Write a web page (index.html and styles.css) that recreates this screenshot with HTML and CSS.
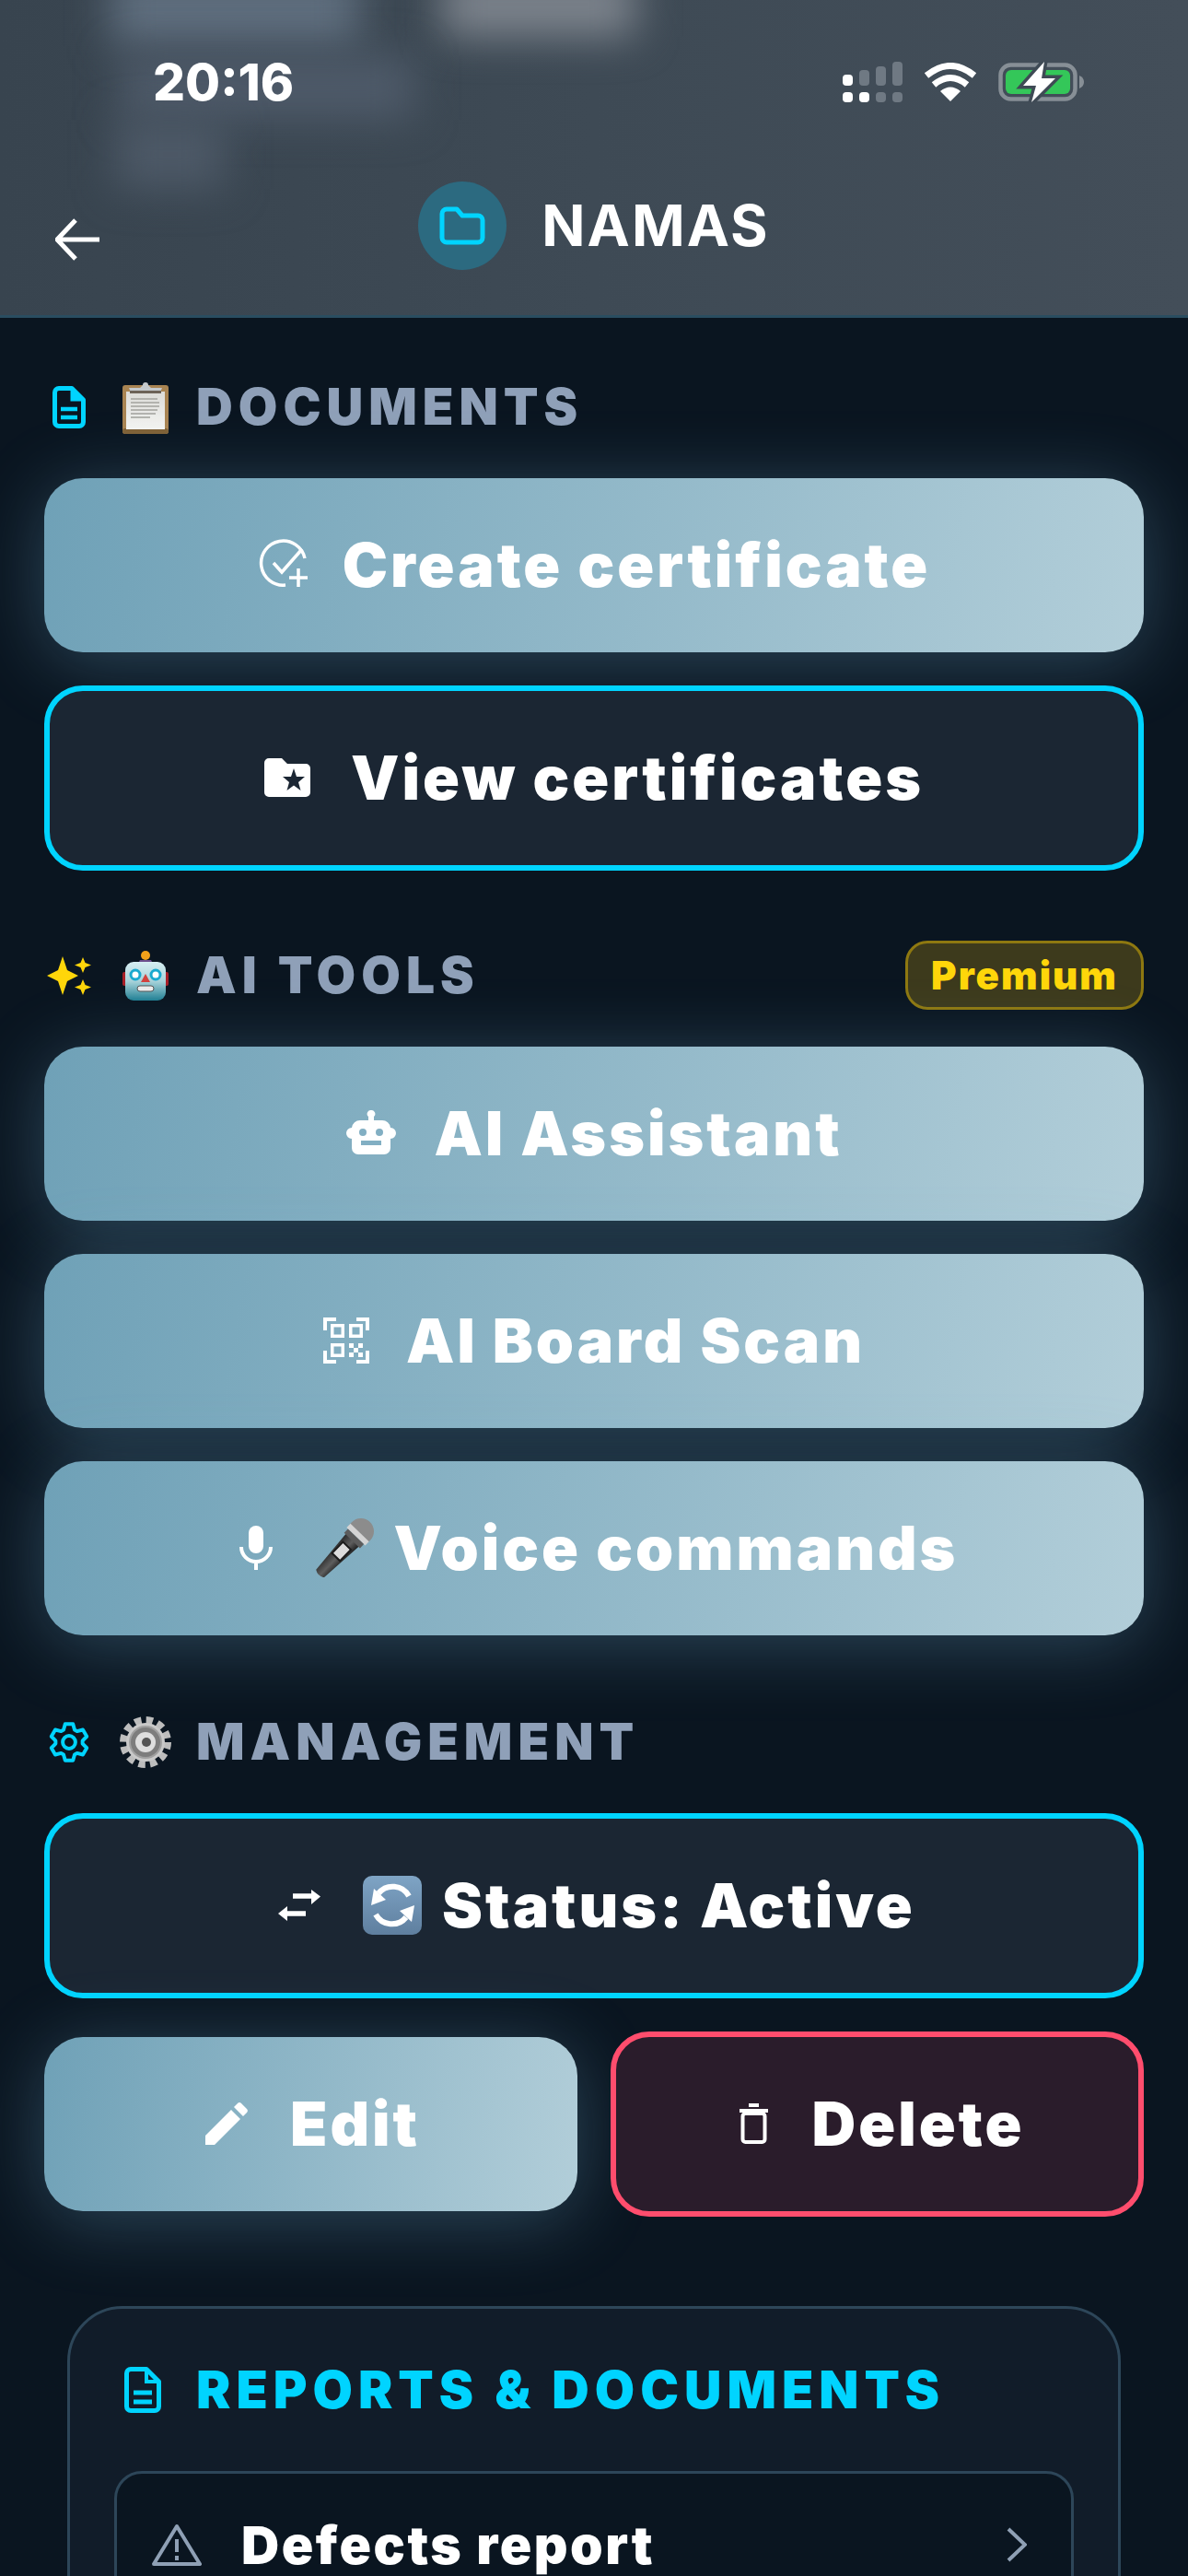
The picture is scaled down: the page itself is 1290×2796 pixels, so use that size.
FILE: index.html
```html
<!DOCTYPE html>
<html lang="en">
<head>
<meta charset="utf-8">
<title>NAMAS</title>
<link rel="stylesheet" href="styles.css">
</head>
<body>
<div class="screen">
  <header class="topbar">
    <div class="blob blob-a"></div>
    <div class="blob blob-b"></div>
    <div class="blob blob-c"></div>
    <div class="blob blob-d"></div>
    <div class="status-bar">
      <span class="time">20:16</span>
      <div class="status-icons">
        <svg class="ic-signal" viewBox="0 0 65 44" width="65" height="44">
          <g fill="#6f7983">
            <rect x="18" y="9" width="11" height="17" rx="4"/><rect x="36" y="5" width="11" height="21" rx="4"/><rect x="54" y="0" width="11" height="26" rx="4"/>
            <rect x="36" y="33" width="11" height="11" rx="4"/><rect x="54" y="33" width="11" height="11" rx="4"/>
          </g>
          <g fill="#fff">
            <rect x="0" y="14" width="11" height="12" rx="4"/><rect x="0" y="33" width="11" height="11" rx="4"/><rect x="18" y="33" width="11" height="11" rx="4"/>
          </g>
        </svg>
        <svg class="ic-wifi" viewBox="0 0 58 42" width="58" height="42">
          <path d="M29 42 L18 31 Q29 22 40 31 Z" fill="#fff"/>
          <path d="M11 24 Q29 9 47 24" fill="none" stroke="#fff" stroke-width="7"/>
          <path d="M3 14 Q29 -7 55 14" fill="none" stroke="#fff" stroke-width="7"/>
        </svg>
        <svg class="ic-batt" viewBox="0 0 93 44" width="93" height="44">
          <rect x="2.500" y="3.500" width="81" height="37" rx="11" fill="none" stroke="#878f96" stroke-width="4.500"/>
          <path d="M88 15 q5 2 5 7 t-5 7 z" fill="#878f96"/>
          <rect x="8" y="9" width="70" height="26" rx="6" fill="#34c759"/>
          <path d="M50 0 L27 26 H41 L36 44 L62 18 H47 Z" fill="#fff" stroke="#3f4a55" stroke-width="7" paint-order="stroke"/>
        </svg>
      </div>
    </div>
    <div class="title-row">
      <svg class="back" viewBox="0 0 48 48" width="48" height="48"><path d="M22 3 L2 24 L22 45 M3 24 H48" fill="none" stroke="#fff" stroke-width="5"/></svg>
      <div class="title-group">
        <span class="folder-badge">
          <svg viewBox="0 0 50 42" width="50" height="42"><path d="M3 8 a5 5 0 0 1 5-5 h11 l6 7 h17 a5 5 0 0 1 5 5 v19 a5 5 0 0 1-5 5 H8 a5 5 0 0 1-5-5 Z" fill="none" stroke="#00d4ff" stroke-width="5" stroke-linejoin="round"/></svg>
        </span>
        <span class="title">NAMAS</span>
      </div>
      <span></span>
    </div>
  </header>

  <main class="content">
    <section class="section">
      <div class="section-head">
        <span class="head-icon">
          <svg viewBox="0 0 36 46" width="36" height="46"><path d="M2.500 7 a4.500 4.500 0 0 1 4.500-4.500 H21 L33.500 15 V39 a4.500 4.500 0 0 1-4.500 4.500 H7 A4.500 4.500 0 0 1 2.500 39 Z" fill="none" stroke="#00d4ff" stroke-width="5" stroke-linejoin="round"/><path d="M21 3 V15 H33" fill="#00d4ff" stroke="#00d4ff" stroke-width="3"/><path d="M9 25 H27 M9 34 H27" stroke="#00d4ff" stroke-width="4.500"/></svg>
        </span>
        <span class="emoji-box">
          <svg viewBox="0 0 50 58" width="50" height="58">
            <defs><linearGradient id="paper" x1="0" y1="0" x2="0" y2="1"><stop offset="0" stop-color="#dcdcd8"/><stop offset="1" stop-color="#f4f4f2"/></linearGradient></defs>
            <rect x="0" y="5" width="50" height="53" rx="3" fill="#a98452"/>
            <rect x="0" y="52" width="50" height="6" rx="3" fill="#7f6136"/>
            <rect x="4" y="12" width="42" height="41" fill="url(#paper)"/>
            <path d="M9 20 H38 M9 24 H40 M9 28 H40 M9 32 H38 M9 36 H36 M9 40 H30" stroke="#b3b3ae" stroke-width="2"/>
            <path d="M9 13 L7 8 H19 L22 5 a3 3 0 0 1 6 0 L31 8 H43 L41 13 Z" fill="#c5c9cc"/>
            <rect x="8" y="11" width="34" height="3" fill="#6d6358"/>
          </svg>
        </span>
        <h2 class="section-title">DOCUMENTS</h2>
      </div>
      <div class="stack">
        <button class="btn btn-fill btn-snug">
          <svg class="btn-icon" viewBox="0 0 56 56" width="56" height="56"><path d="M51 21 A24 24 0 1 0 30 50" fill="none" stroke="#fff" stroke-width="3.500"/><path d="M17 26 L26 36 L48 11" fill="none" stroke="#fff" stroke-width="3.500"/><path d="M44 32 V52 M34 42 H54" stroke="#fff" stroke-width="3.500"/></svg>
          <span>Create certificate</span>
        </button>
        <button class="btn btn-outline btn-view">
          <svg class="btn-icon" viewBox="0 0 50 42" width="50" height="42"><path d="M0 5 a5 5 0 0 1 5-5 h14 l6 6 h20 a5 5 0 0 1 5 5 v26 a5 5 0 0 1-5 5 H5 a5 5 0 0 1-5-5 Z" fill="#fff"/><path d="M32 11 L35 20 H44 L37 26 L39.500 35 L32 29.500 L24.500 35 L27 26 L20 20 H29 Z" fill="#1b2633"/></svg>
          <span>View certificates</span>
        </button>
      </div>
    </section>

    <section class="section section-ai">
      <div class="section-head">
        <span class="head-icon">
          <svg viewBox="0 0 50 42" width="50" height="42"><path d="M18 0 L23 15 L35 21 L23 27 L18 42 L13 27 L1 21 L13 15 Z" fill="#ffd60a"/><path d="M40 1 L42.500 7 L49 9.500 L42.500 12 L40 18 L37.500 12 L31 9.500 L37.500 7 Z" fill="#ffd60a"/><path d="M40 25 L42.500 31 L49 33.500 L42.500 36 L40 42 L37.500 36 L31 33.500 L37.500 31 Z" fill="#ffd60a"/></svg>
        </span>
        <span class="emoji-box">
          <svg viewBox="0 0 50 54" width="50" height="54">
            <defs>
              <linearGradient id="rb" x1="0" y1="0" x2="0" y2="1"><stop offset="0" stop-color="#d6eef2"/><stop offset=".5" stop-color="#a9d3da"/><stop offset="1" stop-color="#1f7f93"/></linearGradient>
            </defs>
            <rect x="0" y="23" width="6" height="15" rx="2" fill="#a91f27"/><rect x="44" y="23" width="6" height="15" rx="2" fill="#a91f27"/>
            <circle cx="25" cy="5" r="5" fill="#f2a11a"/><path d="M19 10 h12 l2 4 H17 Z" fill="#6d4f8e"/>
            <rect x="3" y="12" width="44" height="42" rx="9" fill="url(#rb)"/>
            <circle cx="14" cy="26" r="5" fill="#fff" stroke="#19a9cf" stroke-width="3"/><circle cx="36" cy="26" r="5" fill="#fff" stroke="#19a9cf" stroke-width="3"/>
            <path d="M25 25 L30 34 H20 Z" fill="#d2433f"/>
            <rect x="16" y="38" width="18" height="6" rx="3" fill="#ececec" stroke="#555" stroke-width="1"/>
          </svg>
        </span>
        <h2 class="section-title">AI TOOLS</h2>
        <span class="premium">Premium</span>
      </div>
      <div class="stack">
        <button class="btn btn-fill">
          <svg class="btn-icon" viewBox="0 0 56 50" width="56" height="50"><path d="M28 0 a4 4 0 0 1 3 7 v4 h9 a9 9 0 0 1 9 8 a6 6 0 0 1 0 12 v10 a7 7 0 0 1-7 7 H14 a7 7 0 0 1-7-7 V31 a6 6 0 0 1 0-12 a9 9 0 0 1 9-8 h9 V7 a4 4 0 0 1 3-7 Z" fill="#fff"/><circle cx="19" cy="24" r="4" fill="#82afc3"/><circle cx="37" cy="24" r="4" fill="#82afc3"/><rect x="17" y="33" width="22" height="5" fill="#82afc3"/></svg>
          <span>AI Assistant</span>
        </button>
        <button class="btn btn-fill">
          <svg class="btn-icon" viewBox="0 0 50 50" width="50" height="50"><path d="M2 14 V2 H14 M36 2 H48 V14 M2 36 V48 H14 M36 48 H48 V36" fill="none" stroke="#fff" stroke-width="4"/><rect x="9.750" y="8.750" width="11.500" height="11.500" fill="none" stroke="#fff" stroke-width="3.500"/><rect x="29.750" y="8.750" width="11.500" height="11.500" fill="none" stroke="#fff" stroke-width="3.500"/><rect x="9.750" y="29.750" width="11.500" height="11.500" fill="none" stroke="#fff" stroke-width="3.500"/><path d="M28 28 h5 v5 h-5 z M38 28 h5 v5 h-5 z M33 33 h5 v5 h-5 z M28 38 h5 v5 h-5 z M38 38 h5 v5 h-5 z" fill="#fff"/></svg>
          <span>AI Board Scan</span>
        </button>
        <button class="btn btn-fill btn-wide btn-voice">
          <svg class="btn-icon" viewBox="0 0 36 48" width="36" height="48"><rect x="10" y="0" width="16" height="30" rx="8" fill="#fff"/><path d="M2 23 a16 16 0 0 0 32 0 M18 38 V48" fill="none" stroke="#fff" stroke-width="4"/></svg>
          <span class="emoji-text">
            <svg viewBox="0 0 64 64" width="64" height="64">
              <defs><linearGradient id="mb" x1="0" y1="0" x2="1" y2="0"><stop offset="0" stop-color="#2a2a2a"/><stop offset=".55" stop-color="#5e5e5e"/><stop offset="1" stop-color="#1f1f1f"/></linearGradient></defs>
              <g transform="rotate(44 50 14)">
                <path d="M40 26 H60 L56 78 Q50 82 44 78 Z" fill="url(#mb)"/>
                <rect x="44" y="36" width="12" height="17" fill="#dcdcdc" stroke="#1c1c1c" stroke-width="2"/>
                <path d="M36 14 a14 14 0 0 1 28 0 v4 H36 Z" fill="#8c8c8c"/>
                <rect x="36" y="16" width="28" height="6" fill="#d4d4d4"/>
                <rect x="38" y="22" width="24" height="6" fill="#5c5c5c"/>
              </g>
            </svg>
            <span>Voice commands</span>
          </span>
        </button>
      </div>
    </section>

    <section class="section section-mgmt">
      <div class="section-head">
        <span class="head-icon">
          <svg viewBox="0 0 44 46" width="44" height="46"><g transform="translate(22 23) scale(.92)" fill="none" stroke="#00d4ff" stroke-width="4.300" stroke-linejoin="round"><polygon points="-4.600,-21.500 4.600,-21.500 6.500,-14.600 9.400,-12.900 16.300,-14.700 20.900,-6.800 15.900,-1.700 15.900,1.700 20.900,6.800 16.300,14.700 9.400,12.900 6.500,14.600 4.600,21.500 -4.600,21.500 -6.500,14.600 -9.400,12.900 -16.300,14.700 -20.900,6.800 -15.900,1.700 -15.900,-1.700 -20.900,-6.800 -16.300,-14.700 -9.400,-12.900 -6.500,-14.600"/><circle r="7.500"/></g></svg>
        </span>
        <span class="emoji-box">
          <svg viewBox="0 0 56 56" width="56" height="56">
            <circle cx="28" cy="28" r="23" fill="none" stroke="#bdbdbd" stroke-width="10" stroke-dasharray="7 5.040"/>
            <circle cx="28" cy="28" r="21" fill="#c9c9c9"/>
            <circle cx="28" cy="28" r="17" fill="#7d7d7d" stroke="#a0a0a0" stroke-width="2"/>
            <circle cx="28" cy="28" r="11" fill="#dedede"/>
            <circle cx="29" cy="28" r="5" fill="#555"/>
          </svg>
        </span>
        <h2 class="section-title">MANAGEMENT</h2>
      </div>
      <div class="stack">
        <button class="btn btn-outline btn-wide btn-status">
          <svg class="btn-icon" viewBox="0 0 46 34" width="46" height="34"><path d="M16 7 H36" stroke="#fff" stroke-width="5.500"/><path d="M36 0 L46 7.500 L36 16 Z" fill="#fff"/><path d="M10 26 H30" stroke="#fff" stroke-width="5.500"/><path d="M10 18 L0 26 L10 34 Z" fill="#fff"/></svg>
          <span class="emoji-text">
            <svg viewBox="0 0 64 64" width="64" height="64">
              <defs><linearGradient id="sq" x1="0" y1="0" x2="0" y2="1"><stop offset="0" stop-color="#7fa4c5"/><stop offset="1" stop-color="#5f7f9f"/></linearGradient></defs>
              <rect x="0" y="0" width="64" height="64" rx="10" fill="url(#sq)"/>
              <path d="M50 22 A20 20 0 0 0 17 19" fill="none" stroke="#fff" stroke-width="6"/>
              <path d="M9 32 L12 14 L25 26 Z" fill="#fff"/>
              <path d="M14 42 A20 20 0 0 0 47 45" fill="none" stroke="#fff" stroke-width="6"/>
              <path d="M56 32 L53 50 L40 38 Z" fill="#fff"/>
            </svg>
            <span>Status: Active</span>
          </span>
        </button>
        <div class="pair">
          <button class="btn btn-fill btn-wide btn-edit">
            <svg class="btn-icon" viewBox="0 0 46 46" width="46" height="46"><path d="M0 46 V36 L28 8 L38 18 L10 46 Z M31 5 L35 1 a3 3 0 0 1 4 0 L45 7 a3 3 0 0 1 0 4 L41 15 Z" fill="#fff"/></svg>
            <span>Edit</span>
          </button>
          <button class="btn btn-danger btn-wide btn-delete">
            <svg class="btn-icon" viewBox="0 0 33 44" width="33" height="44"><path d="M11 2 H22 M1 8 H32" stroke="#fff" stroke-width="4"/><rect x="4.500" y="11" width="24" height="31" rx="3" fill="none" stroke="#fff" stroke-width="4"/></svg>
            <span>Delete</span>
          </button>
        </div>
      </div>
    </section>

    <section class="panel">
      <div class="panel-head">
        <svg viewBox="0 0 40 50" width="40" height="50"><path d="M2.500 7 a4.500 4.500 0 0 1 4.500-4.500 H24 L37.500 16 V43 a4.500 4.500 0 0 1-4.500 4.500 H7 A4.500 4.500 0 0 1 2.500 43 Z" fill="none" stroke="#00d4ff" stroke-width="5" stroke-linejoin="round"/><path d="M24 3 V16 H37" fill="none" stroke="#00d4ff" stroke-width="4"/><path d="M10 28 H30 M10 38 H30" stroke="#00d4ff" stroke-width="5"/></svg>
        <h2 class="panel-title">REPORTS &amp; DOCUMENTS</h2>
      </div>
      <div class="report-row">
        <svg class="warn" viewBox="0 0 54 46" width="54" height="46"><path d="M27 3 L52 44 H2 Z" fill="none" stroke="#8fa0b5" stroke-width="4" stroke-linejoin="round"/><path d="M27 17 V31 M27 35 V40" stroke="#8fa0b5" stroke-width="4"/></svg>
        <span class="report-name">Defects report</span>
        <svg class="chev" viewBox="0 0 22 38" width="22" height="38"><path d="M2 2 L20 19 L2 36" fill="none" stroke="#8fa0b5" stroke-width="4"/></svg>
      </div>
    </section>
  </main>
</div>
</body>
</html>
```

FILE: styles.css
```css
* { box-sizing: border-box; }
html, body { margin: 0; padding: 0; height: 2796px; overflow: hidden; background: #0a1520; }
body { font-family: Inter, "Liberation Sans", sans-serif; color: #fff; }
.screen { height: 2796px; overflow: hidden; background: #0a1520; }

.topbar {
  position: relative;
  height: 345px;
  overflow: hidden;
  border-bottom: 3px solid #2a4d60;
  background: linear-gradient(90deg, #38444f, #3e4a55 50%, #434e59);
}
.blob { position: absolute; filter: blur(22px); }
.blob-a { left: 120px; top: -30px; width: 270px; height: 80px; background: #5f6e7e; }
.blob-b { left: 480px; top: -30px; width: 210px; height: 70px; background: #7c838c; }
.blob-c { left: 130px; top: 60px; width: 320px; height: 70px; background: #4e5a69; }
.blob-d { left: 125px; top: 130px; width: 120px; height: 75px; background: #4d5967; }

.status-bar { position: relative; display: flex; justify-content: space-between; align-items: center; padding: 65px 113px 0 166px; }
.time { font-weight: 800; font-size: 55px; line-height: 48px; letter-spacing: 0; }
.status-icons { display: flex; align-items: center; gap: 23px; }

.title-row { position: relative; display: grid; grid-template-columns: 1fr auto 1fr; align-items: center; margin-top: 84px; padding: 0 60px; }
.back { margin-top: 30px; }
.title-group { display: flex; align-items: center; gap: 38px; }
.folder-badge { display: flex; align-items: center; justify-content: center; width: 96px; height: 96px; border-radius: 50%; background: #2c6a80; }
.title { font-weight: 700; font-size: 62px; line-height: 70px; letter-spacing: 2px; }

.content { padding: 59px 48px 0; }
.section-ai { margin-top: 76px; }
.section-mgmt { margin-top: 78px; }
.section-head { display: flex; align-items: center; height: 75px; margin-bottom: 40px; }
.head-icon { display: flex; justify-content: center; width: 54px; margin-right: 28px; }
.emoji-box { display: flex; justify-content: center; width: 56px; margin-right: 27px; }
.section-title { margin: 0; font-size: 55px; font-weight: 900; letter-spacing: 6px; color: #8fa0b8; line-height: 1; }
.premium { margin-left: auto; display: flex; align-items: center; height: 75px; padding: 0 25px; border: 3px solid #8e7810; border-radius: 24px; background: #3d3a1c; color: #ffd60a; font-size: 42px; font-weight: 900; letter-spacing: 2px; }

.stack { display: flex; flex-direction: column; gap: 36px; }
.btn {
  display: flex; align-items: center; justify-content: center; gap: 40px;
  width: 100%; height: 189px; padding: 0 0 2px;
  border: 0; border-radius: 42px;
  font-family: inherit; font-size: 66px; font-weight: 900; letter-spacing: 3px; color: #fff;
}
.btn-fill { background: linear-gradient(100deg, #6fa1b7, #b2ced9); box-shadow: 0 10px 80px rgba(125, 190, 225, .3); }
.btn-outline { height: 201px; background: #1b2633; border: 6px solid #00d4ff; }
.btn-danger { height: 201px; background: #2a1c2b; border: 6px solid #ff4d6d; }
.btn-snug { gap: 36px; }
.btn-view { gap: 44px; }
.btn-wide { gap: 46px; }
.btn-voice { padding-left: 10px; }
.btn-status { padding-left: 6px; }
.btn-edit { padding-left: 4px; }
.btn-delete { padding-left: 10px; }
.emoji-text { display: flex; align-items: center; gap: 22px; }
.pair { display: grid; grid-template-columns: 1fr 1fr; gap: 36px; align-items: center; }

.panel { margin: 97px 25px 0; padding: 48px; height: 400px; border: 3px solid #2d4659; border-radius: 60px; background: #111c29; }
.panel-head { display: flex; align-items: center; gap: 38px; padding-left: 11px; height: 80px; }
.panel-title { margin: 0; font-size: 56px; font-weight: 900; letter-spacing: 6px; color: #00d4ff; line-height: 1; }
.report-row { display: flex; align-items: center; margin-top: 48px; height: 160px; padding: 0 48px 0 38px; border: 3px solid #2d4659; border-radius: 30px; background: #0a1520; }
.warn { margin-right: 43px; }
.report-name { font-size: 57px; font-weight: 900; letter-spacing: 2.500px; }
.chev { margin-left: auto; }
```
